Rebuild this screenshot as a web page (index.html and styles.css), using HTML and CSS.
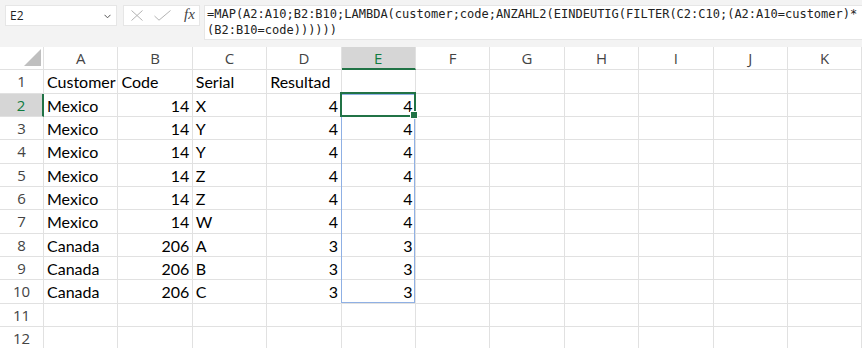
FILE: index.html
```html
<!DOCTYPE html>
<html>
<head>
<meta charset="utf-8">
<link rel="stylesheet" href="styles.css">
</head>
<body>
<div class="app">
  <div class="toolbar">
    <div class="namebox">
      <span class="name">E2</span>
      <svg class="chev" width="7" height="5" viewBox="0 0 7 5"><path d="M0.5 0.8 L3.5 3.8 L6.5 0.8" fill="none" stroke="#555" stroke-width="1"/></svg>
    </div>
    <div class="fxbox">
      <svg class="ico" width="12" height="11" viewBox="0 0 12 11"><path d="M0.5 0.5 L11.5 10.5 M11.5 0.5 L0.5 10.5" stroke="#b3b3b3" stroke-width="1" fill="none"/></svg>
      <svg class="ico" width="17" height="11" viewBox="0 0 17 11"><path d="M0.5 6 L5 10.2 L16.5 0.5" stroke="#b3b3b3" stroke-width="1" fill="none"/></svg>
      <span class="fx">fx</span>
    </div>
    <div class="formula">=MAP(A2:A10;B2:B10;LAMBDA(customer;code;ANZAHL2(EINDEUTIG(FILTER(C2:C10;(A2:A10=customer)*<br>(B2:B10=code))))))</div>
  </div>
  <div class="sheet">
    <div class="corner"><svg width="18" height="18" viewBox="0 0 18 18"><path d="M17 0 L17 17 L0 17 Z" fill="#bfbfbf"/></svg></div>
    <div class="ch">A</div><div class="ch">B</div><div class="ch">C</div><div class="ch">D</div><div class="ch sel">E</div><div class="ch">F</div><div class="ch">G</div><div class="ch">H</div><div class="ch">I</div><div class="ch">J</div><div class="ch">K</div>

    <div class="rh">1</div><div class="c">Customer</div><div class="c">Code</div><div class="c">Serial</div><div class="c">Resultad</div><div class="c"></div><div class="c"></div><div class="c"></div><div class="c"></div><div class="c"></div><div class="c"></div><div class="c"></div>

    <div class="rh sel">2</div><div class="c">Mexico</div><div class="c n">14</div><div class="c">X</div><div class="c n">4</div><div class="c n act">4<div class="spill"></div><div class="active"><span class="handle"></span></div></div><div class="c"></div><div class="c"></div><div class="c"></div><div class="c"></div><div class="c"></div><div class="c"></div>

    <div class="rh">3</div><div class="c">Mexico</div><div class="c n">14</div><div class="c">Y</div><div class="c n">4</div><div class="c n">4</div><div class="c"></div><div class="c"></div><div class="c"></div><div class="c"></div><div class="c"></div><div class="c"></div>

    <div class="rh">4</div><div class="c">Mexico</div><div class="c n">14</div><div class="c">Y</div><div class="c n">4</div><div class="c n">4</div><div class="c"></div><div class="c"></div><div class="c"></div><div class="c"></div><div class="c"></div><div class="c"></div>

    <div class="rh">5</div><div class="c">Mexico</div><div class="c n">14</div><div class="c">Z</div><div class="c n">4</div><div class="c n">4</div><div class="c"></div><div class="c"></div><div class="c"></div><div class="c"></div><div class="c"></div><div class="c"></div>

    <div class="rh">6</div><div class="c">Mexico</div><div class="c n">14</div><div class="c">Z</div><div class="c n">4</div><div class="c n">4</div><div class="c"></div><div class="c"></div><div class="c"></div><div class="c"></div><div class="c"></div><div class="c"></div>

    <div class="rh">7</div><div class="c">Mexico</div><div class="c n">14</div><div class="c">W</div><div class="c n">4</div><div class="c n">4</div><div class="c"></div><div class="c"></div><div class="c"></div><div class="c"></div><div class="c"></div><div class="c"></div>

    <div class="rh">8</div><div class="c">Canada</div><div class="c n">206</div><div class="c">A</div><div class="c n">3</div><div class="c n">3</div><div class="c"></div><div class="c"></div><div class="c"></div><div class="c"></div><div class="c"></div><div class="c"></div>

    <div class="rh">9</div><div class="c">Canada</div><div class="c n">206</div><div class="c">B</div><div class="c n">3</div><div class="c n">3</div><div class="c"></div><div class="c"></div><div class="c"></div><div class="c"></div><div class="c"></div><div class="c"></div>

    <div class="rh">10</div><div class="c">Canada</div><div class="c n">206</div><div class="c">C</div><div class="c n">3</div><div class="c n">3</div><div class="c"></div><div class="c"></div><div class="c"></div><div class="c"></div><div class="c"></div><div class="c"></div>

    <div class="rh">11</div><div class="c"></div><div class="c"></div><div class="c"></div><div class="c"></div><div class="c"></div><div class="c"></div><div class="c"></div><div class="c"></div><div class="c"></div><div class="c"></div><div class="c"></div>

    <div class="rh">12</div><div class="c"></div><div class="c"></div><div class="c"></div><div class="c"></div><div class="c"></div><div class="c"></div><div class="c"></div><div class="c"></div><div class="c"></div><div class="c"></div><div class="c"></div>
  </div>
</div>
</body>
</html>
```

FILE: styles.css
```css
html, body {
  margin: 0;
  padding: 0;
  background: #ffffff;
}
.app {
  width: 862px;
  height: 348px;
  overflow: hidden;
}
.toolbar {
  height: 47px;
  box-sizing: border-box;
  background: #f3f3f3;
  padding-top: 5px;
  display: flex;
  align-items: flex-start;
}
.namebox {
  margin-left: 5px;
  width: 112px;
  height: 21px;
  box-sizing: border-box;
  background: #fff;
  border: 1px solid #e6e6e6;
  display: flex;
  align-items: center;
  justify-content: space-between;
  padding: 0 5px 0 4px;
  font-family: "Open Sans", sans-serif;
  font-size: 12px;
  color: #222;
}
.chev { margin-top: 1px; }
.fxbox {
  margin-left: 6px;
  width: 77px;
  height: 21px;
  box-sizing: border-box;
  background: #fff;
  border: 1px solid #e6e6e6;
  display: flex;
  align-items: center;
  padding-left: 7px;
}
.fxbox .ico:nth-child(2) { margin-left: 11px; margin-top: -1px; }
.fx {
  margin-left: 13px;
  font-family: "Liberation Serif", serif;
  font-style: italic;
  font-size: 15px;
  color: #444;
  margin-top: -2px;
}
.formula {
  margin-left: 4px;
  flex: 1;
  height: 35px;
  box-sizing: border-box;
  background: #fff;
  border: 1px solid #e6e6e6;
  border-right: none;
  padding: 0 0 0 2px;
  font-family: "DejaVu Sans Mono", monospace;
  font-size: 12px;
  line-height: 16px;
  color: #222;
  white-space: nowrap;
  overflow: hidden;
}
.sheet {
  display: grid;
  grid-template-columns: 44px repeat(11, 74.4px);
  grid-template-rows: repeat(13, 23.333px);
  background: #fff;
}
.corner, .ch, .rh, .c {
  box-sizing: border-box;
  border-right: 1px solid #e1e1e1;
  border-bottom: 1px solid #e1e1e1;
  white-space: nowrap;
}
.corner {
  display: flex;
  align-items: flex-end;
  justify-content: flex-end;
  padding: 0 1px 2px 0;
}
.ch, .rh {
  font-family: "Open Sans", sans-serif;
  font-size: 15px;
  color: #444;
  display: flex;
  align-items: center;
  justify-content: center;
}
.ch.sel {
  background: #d6d6d6;
  color: #107c41;
  border-bottom: 2px solid #217346;
}
.rh.sel {
  background: #d6d6d6;
  color: #107c41;
  border-right: 2px solid #217346;
}
.c {
  font-family: "Lato", sans-serif;
  font-size: 16px;
  color: #000;
  padding: 0 2.5px 0 3px;
  line-height: 24.5px;
  overflow: visible;
}
.c.n { text-align: right; }
.act { position: relative; }
.spill {
  position: absolute;
  left: -1px;
  top: 0;
  right: 0;
  height: 209px;
  border: 1px solid #8fb0e4;
  box-sizing: border-box;
}
.active {
  position: absolute;
  left: -2px;
  top: -2px;
  right: -1px;
  bottom: -1px;
  border: 2px solid #217346;
  box-sizing: border-box;
}
.handle {
  position: absolute;
  right: -4px;
  bottom: -4px;
  width: 6px;
  height: 6px;
  background: #217346;
  border: 1px solid #fff;
}
```
